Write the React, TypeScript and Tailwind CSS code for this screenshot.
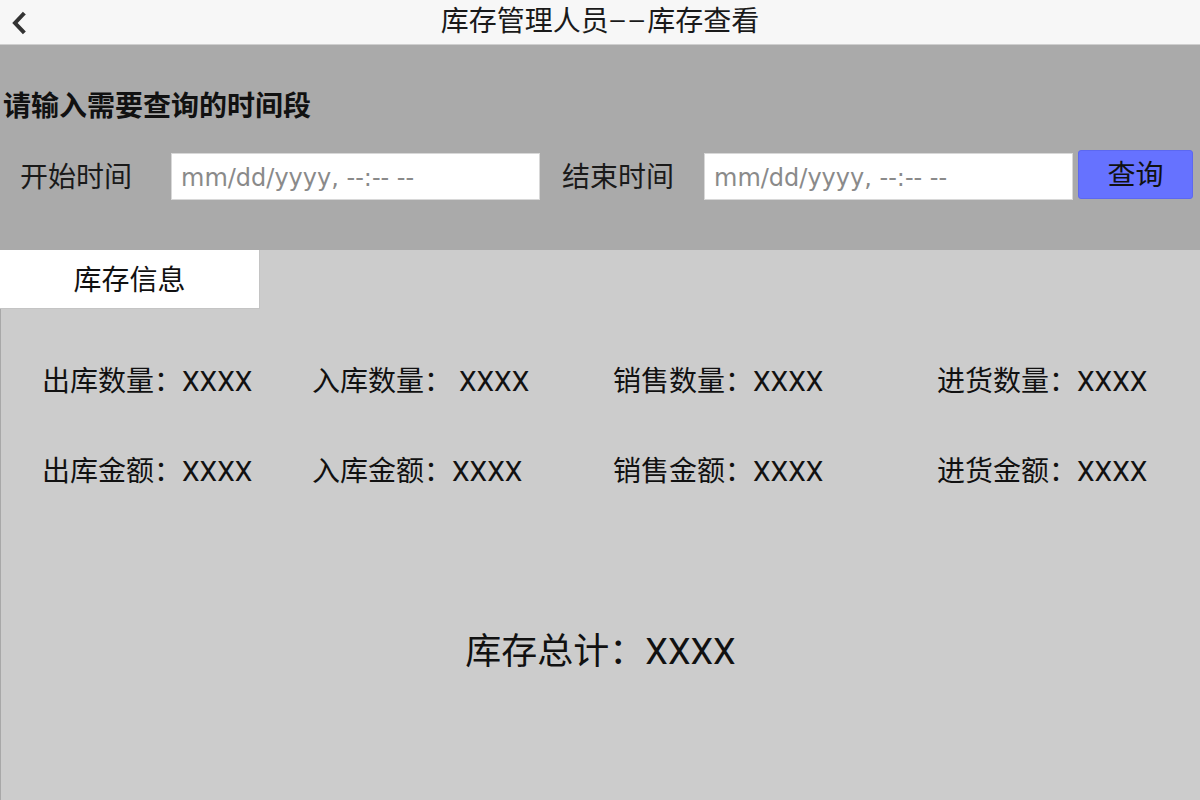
const fieldsTop = [
  { label: "出库数量：", value: "XXXX" },
  { label: "入库数量：", value: " XXXX" },
  { label: "销售数量：", value: "XXXX" },
  { label: "进货数量：", value: "XXXX" },
];

const fieldsBottom = [
  { label: "出库金额：", value: "XXXX" },
  { label: "入库金额：", value: "XXXX" },
  { label: "销售金额：", value: "XXXX" },
  { label: "进货金额：", value: "XXXX" },
];

function Row({ items }: { items: { label: string; value: string }[] }) {
  return (
    <div className="grid grid-cols-[270px_301px_324px_1fr] pl-[41px]">
      {items.map((f) => (
        <div key={f.label} className="whitespace-pre text-[28px] leading-[40px] text-[#111]">
          {f.label}
          {f.value}
        </div>
      ))}
    </div>
  );
}

export default function App() {
  return (
    <div className="w-[1200px] h-[800px] flex flex-col overflow-hidden font-['Roboto','Noto_Sans_CJK_SC',sans-serif]">
      {/* top bar */}
      <header className="h-[45px] shrink-0 relative flex items-center justify-center bg-[#f7f7f7] border-b border-[#cfcfcf]">
        <button className="absolute left-[10px] top-[11px] w-[18px] h-[24px] flex items-center justify-center">
          <svg width="16" height="24" viewBox="0 0 16 24" fill="none">
            <path d="M12 3.5 L4 12 L12 20.5" stroke="#333" strokeWidth="4" strokeLinecap="square" />
          </svg>
        </button>
        <h1 className="text-[28px] leading-none text-[#1a1a1a]">
          库存管理人员<span className="text-[22px] tracking-[2px] align-[2px]">——</span>库存查看
        </h1>
      </header>

      {/* query panel */}
      <section className="h-[205px] shrink-0 bg-[#aaaaaa] pt-[44px]">
        <h2 className="pl-[3px] text-[28px] leading-[36px] font-bold text-[#111]">请输入需要查询的时间段</h2>
        <div className="mt-[25px] flex items-start">
          <span className="ml-[20px] w-[151px] mt-[4px] text-[28px] leading-[48px] text-[#1a1a1a]">开始时间</span>
          <input
            type="text"
            placeholder="mm/dd/yyyy, --:-- --"
            className="w-[369px] h-[47px] mt-[3px] bg-white border border-[#d8d8d8] px-[9px] pt-[2px] font-['DejaVu_Sans',sans-serif] text-[24px] text-[#333] placeholder:text-[#8a8a8a] outline-none"
          />
          <span className="ml-[22px] w-[142px] mt-[4px] text-[28px] leading-[48px] text-[#1a1a1a]">结束时间</span>
          <input
            type="text"
            placeholder="mm/dd/yyyy, --:-- --"
            className="w-[369px] h-[47px] mt-[3px] bg-white border border-[#d8d8d8] px-[9px] pt-[2px] font-['DejaVu_Sans',sans-serif] text-[24px] text-[#333] placeholder:text-[#8a8a8a] outline-none"
          />
          <button className="ml-[5px] w-[115px] h-[49px] pt-[2px] rounded-[3px] bg-[#6672ff] border border-[#5c68f0] text-[28px] text-[#111]">
            查询
          </button>
        </div>
      </section>

      {/* info panel */}
      <section className="flex-1 bg-[#cccccc] border-l border-[#a8a8a8] flex flex-col">
        <div className="w-[260px] h-[59px] pt-[4px] bg-white border-r border-b border-[#c4c4c4] flex items-center justify-center -ml-px">
          <span className="text-[28px] text-[#111]">库存信息</span>
        </div>
        <div className="mt-[53px] flex flex-col gap-[50px]">
          <Row items={fieldsTop} />
          <Row items={fieldsBottom} />
        </div>
        <div className="mt-[136px] text-center text-[36px] leading-[48px] text-[#111] whitespace-pre">
          库存总计：XXXX
        </div>
      </section>
    </div>
  );
}
